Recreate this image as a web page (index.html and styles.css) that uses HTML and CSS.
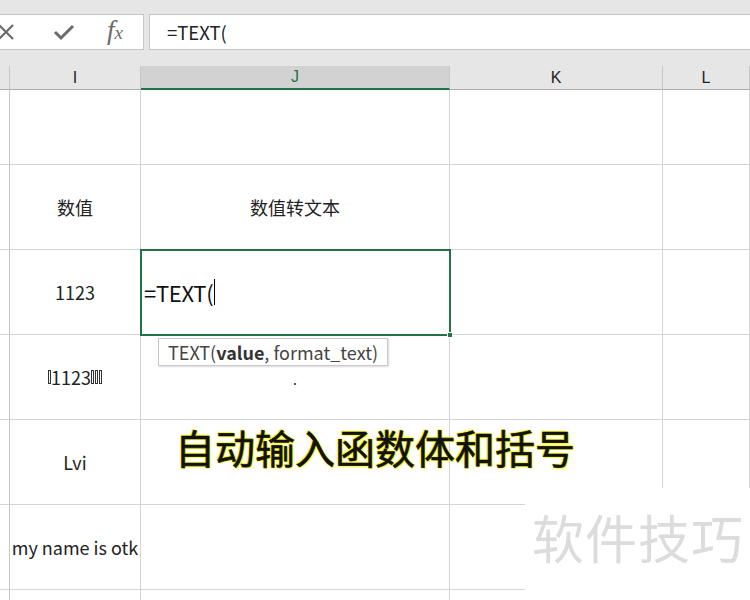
FILE: index.html
```html
<!DOCTYPE html>
<html lang="zh">
<head>
<meta charset="utf-8">
<link rel="stylesheet" href="styles.css">
</head>
<body>
<div class="app">
  <div class="fbar">
    <div class="fbtns">
      <svg class="ic-x" width="18" height="18" viewBox="0 0 18 18"><path d="M2 2 L16 16 M16 2 L2 16" stroke="#6b6b6b" stroke-width="2.2" fill="none"/></svg>
      <svg class="ic-ok" width="22" height="18" viewBox="0 0 22 18"><path d="M2 9 L8 15 L20 3" stroke="#6b6b6b" stroke-width="3" fill="none"/></svg>
      <span class="ic-fx">f<span class="x">x</span></span>
    </div>
    <div class="finput">=TEXT(</div>
  </div>
  <div class="sheet">
    <div class="hdr rh"></div>
    <div class="hdr">I</div>
    <div class="hdr sel">J</div>
    <div class="hdr">K</div>
    <div class="hdr">L</div>

    <div class="c rh"></div><div class="c"></div><div class="c"></div><div class="c"></div><div class="c"></div>

    <div class="c rh"></div><div class="c">数值</div><div class="c">数值转文本</div><div class="c"></div><div class="c"></div>

    <div class="c rh"></div><div class="c">1123</div><div class="c active"><span class="edit">=TEXT(</span><span class="caret"></span><span class="handle"></span></div><div class="c"></div><div class="c"></div>

    <div class="c rh"></div><div class="c"><span class="tofu"></span>1123<span class="tofu"></span><span class="tofu"></span><span class="tofu"></span></div><div class="c dot">.</div><div class="c"></div><div class="c"></div>

    <div class="c rh"></div><div class="c">Lvi</div><div class="c"></div><div class="c"></div><div class="c"></div>

    <div class="c rh"></div><div class="c">my name is otk</div><div class="c"></div><div class="c"></div><div class="c"></div>

    <div class="c rh"></div><div class="c"></div><div class="c"></div><div class="c"></div><div class="c"></div>

    <div class="tip">TEXT(<b>value</b>, format_text)</div>
    <div class="caption">自动输入函数体和括号</div>
    <div class="wm">软件技巧</div>
  </div>
</div>
</body>
</html>
```
FILE: styles.css
```css
* { box-sizing: border-box; }
html, body { margin: 0; padding: 0; }
body {
  width: 750px;
  height: 600px;
  overflow: hidden;
  background: #fff;
  font-family: "Noto Sans CJK SC", "Noto Sans", sans-serif;
  color: #222;
}
.app { width: 750px; height: 600px; display: flex; flex-direction: column; }
.fbar {
  height: 66px;
  background: #e6e6e6;
  display: flex;
  gap: 5px;
  padding-top: 14px;
  padding-bottom: 16px;
}
.fbtns {
  width: 154px;
  margin-left: -10px;
  background: #fff;
  border: 1px solid #c6c6c6;
  display: flex;
  align-items: center;
  padding-left: 10px;
}
.ic-x { margin-left: -4px; }
.ic-ok { margin-left: 38px; }
.ic-fx {
  margin-left: 32px;
  font-family: "Liberation Serif", serif;
  font-style: italic;
  font-size: 27px;
  color: #6b6b6b;
  line-height: 1;
  margin-top: -3px;
}
.ic-fx .x { font-size: 19px; }
.finput {
  flex: 1;
  background: #fff;
  border: 1px solid #c6c6c6;
  border-right: none;
  font-size: 18.5px;
  line-height: 34px;
  padding-left: 17px;
  color: #222;
}
.sheet {
  position: relative;
  flex: 1;
  display: grid;
  grid-template-columns: 10px 131px 309px 213px 87px;
  grid-template-rows: 24px 75px repeat(5, 85px) 40px;
}
.hdr {
  background: #e6e6e6;
  border-right: 1px solid #c6c6c6;
  border-bottom: 1px solid #acacac;
  font-family: "Liberation Sans", sans-serif;
  font-size: 16px;
  color: #222;
  display: flex;
  align-items: center;
  justify-content: center;
}
.hdr.sel {
  background: #d2d2d2;
  border-bottom: 2px solid #217346;
  color: #217346;
}
.c {
  border-right: 1px solid #d4d4d4;
  border-bottom: 1px solid #d4d4d4;
  display: flex;
  align-items: center;
  justify-content: center;
  font-size: 18px;
  color: #222;
  white-space: nowrap;
}
.rh { border-right: 1px solid #c6c6c6; }
.active {
  position: relative;
  justify-content: flex-start;
  outline: 2px solid #217346;
  outline-offset: -1px;
  font-size: 22px;
  padding-left: 3px;
  z-index: 1;
}
.edit { color: #111; letter-spacing: -0.3px; }
.caret { display: inline-block; width: 1px; height: 26px; background: #000; margin-left: 1px; }
.handle {
  position: absolute;
  right: -4px;
  bottom: -4px;
  width: 6px;
  height: 6px;
  background: #217346;
  border: 1px solid #fff;
}
.tofu {
  display: inline-block;
  width: 3px;
  height: 14px;
  border: 1px solid #333;
  vertical-align: -1px;
  margin: 0 0.5px;
}
.dot { align-items: flex-start; padding-top: 34px; font-size: 14px; }
.tip {
  position: absolute;
  left: 158px;
  top: 272px;
  height: 28px;
  padding: 0 9px;
  background: #fff;
  border: 1px solid #c8c8c8;
  box-shadow: 1px 1px 2px rgba(0,0,0,0.15);
  font-size: 18px;
  line-height: 26px;
  color: #444;
  z-index: 2;
}
.tip b { color: #333; }
.caption {
  position: absolute;
  left: 175px;
  top: 352px;
  font-size: 40px;
  font-weight: 400;
  color: #111;
  -webkit-text-stroke: 0.6px #111;
  text-shadow: 0 0 2px #ffff33, 0 0 2px #ffff33, 1px 1px 1px #f0f000, -1px -1px 1px #f0f000;
  z-index: 2;
}
.wm {
  position: absolute;
  left: 525px;
  top: 422px;
  width: 225px;
  height: 120px;
  background: #fff;
  color: #dcdcdc;
  font-size: 52px;
  padding-left: 7px;
  padding-top: 18px;
  letter-spacing: 1px;
  line-height: 1.2;
  z-index: 2;
}
```
